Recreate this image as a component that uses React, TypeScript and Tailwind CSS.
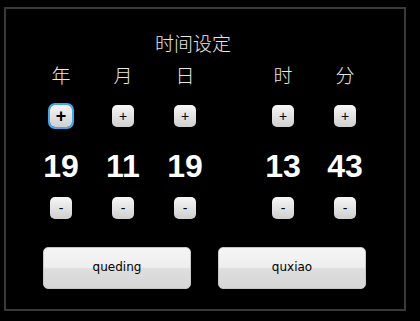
import { useState } from "react";

type Field = { label: string; value: number; min: number; max: number };

const SmallButton = ({
  sign,
  focused,
  onClick,
}: {
  sign: "+" | "-";
  focused?: boolean;
  onClick: () => void;
}) => (
  <button
    onClick={onClick}
    className={`flex h-[22px] w-[22px] items-center justify-center rounded-[5px] bg-gradient-to-b from-[#f7f7f7] to-[#cfcfcf] text-black leading-none ${
      focused ? "ring-2 ring-[#3fa9f0] font-black text-[18px]" : "text-[14px]"
    }`}
    style={{ fontFamily: '"Liberation Sans", Arial, sans-serif' }}
  >
    {sign}
  </button>
);

export default function App() {
  const [fields, setFields] = useState<Field[]>([
    { label: "年", value: 19, min: 0, max: 99 },
    { label: "月", value: 11, min: 1, max: 12 },
    { label: "日", value: 19, min: 1, max: 31 },
    { label: "时", value: 13, min: 0, max: 23 },
    { label: "分", value: 43, min: 0, max: 59 },
  ]);

  const step = (i: number, d: number) =>
    setFields((fs) =>
      fs.map((f, idx) =>
        idx === i ? { ...f, value: Math.min(f.max, Math.max(f.min, f.value + d)) } : f
      )
    );

  const cjk = { fontFamily: '"Noto Sans CJK SC", "DejaVu Sans", sans-serif' };

  return (
    <div className="h-[321px] w-[420px] bg-black pl-[4px] pt-[7px]">
      <div className="h-[304px] w-[402px] border-2 border-[#3a3a3a]">
        <div
          className="ml-[149px] mt-[24px] text-[19px] font-light leading-[20px] text-[#e8e8e8]"
          style={cjk}
        >
          时间设定
        </div>

        <div className="mt-[12px] flex pl-[24px]">
          {fields.map((f, i) => (
            <div
              key={f.label}
              className={`flex w-[62px] flex-col items-center ${i === 3 ? "ml-[36px]" : ""}`}
            >
              <div className="text-[19px] font-light leading-[20px] text-[#e8e8e8]" style={cjk}>
                {f.label}
              </div>
              <div className="mt-[20px]">
                <SmallButton sign="+" focused={i === 0} onClick={() => step(i, 1)} />
              </div>
              <div
                className="mt-[23px] h-[32px] text-[32px] font-bold leading-[32px] text-white"
                style={{ fontFamily: '"Liberation Sans", Arial, sans-serif' }}
              >
                {f.value}
              </div>
              <div className="mt-[15px]">
                <SmallButton sign="-" onClick={() => step(i, -1)} />
              </div>
            </div>
          ))}
        </div>

        <div
          className="ml-[37px] mt-[28px] flex gap-[27px] text-black"
          style={{ fontFamily: '"DejaVu Sans", Tahoma, sans-serif' }}
        >
          {["queding", "quxiao"].map((t) => (
            <button
              key={t}
              className="h-[42px] w-[148px] rounded-[5px] border border-[#c8c8c8] bg-[linear-gradient(#f5f5f5_0%,#eeeeee_48%,#dedede_52%,#d6d6d6_100%)] pb-[3px] text-[12px]"
            >
              {t}
            </button>
          ))}
        </div>
      </div>
    </div>
  );
}
